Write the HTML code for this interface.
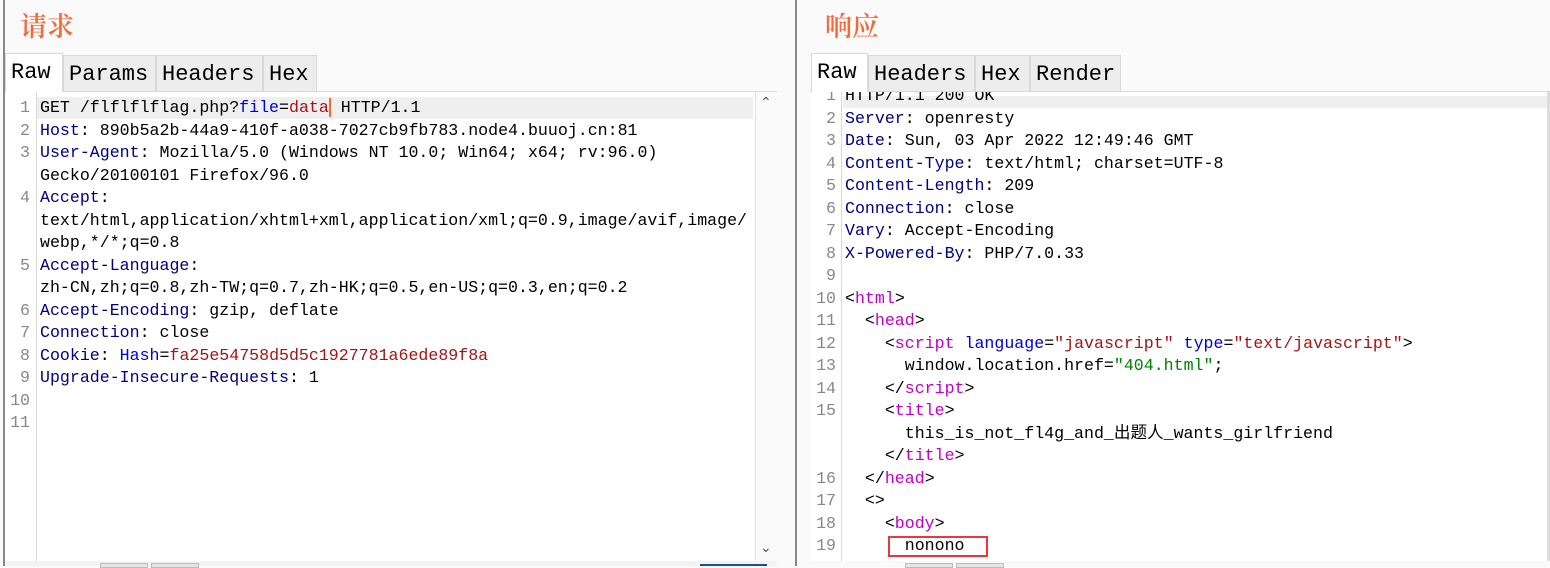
<!DOCTYPE html>
<html><head><meta charset="utf-8"><style>
body{margin:0;width:1550px;height:566px;background:#fafafa;position:relative;overflow:hidden;font-family:"Liberation Mono","Noto Sans CJK SC",monospace;}
.t{position:absolute;font-family:"Noto Serif CJK SC","Liberation Serif",serif;color:#f26a3c;font-size:27px;font-weight:600;}
.tab{position:absolute;height:36px;line-height:38px;font-family:"Liberation Mono",serif;font-size:22px;color:#000;background:#ededed;border:1px solid #d8d8d8;border-bottom:none;padding:0 5px;box-sizing:border-box;}
.tab.a{background:#fff;}
.ed{position:absolute;background:#fff;overflow:hidden;}
.r{position:absolute;height:22.5px;line-height:22.5px;font-size:16.6px;white-space:pre;color:#000;}
.n{position:absolute;height:22.5px;line-height:22.5px;font-size:16.6px;color:#888;text-align:right;}
.k{color:#000080}.v{color:#a31515}.b{color:#0000dd}.m{color:#c000c0}.g{color:#008000}
</style></head><body>
<div style="position:absolute;left:3px;top:0;width:2px;height:566px;background:#888"></div>
<div style="position:absolute;left:795px;top:0;width:2px;height:566px;background:#888"></div>
<div class="t" style="left:20px;top:5px">请求</div>
<div class="t" style="left:825px;top:5px">响应</div>
<div style="position:absolute;left:5px;top:91px;width:772px;height:1px;background:#d8d8d8"></div>
<div style="position:absolute;left:810px;top:91px;width:740px;height:1px;background:#d8d8d8"></div>
<div class="tab a" style="left:5px;top:53px;width:58px;height:39px">Raw</div>
<div class="tab" style="left:63px;top:55px;width:93px">Params</div>
<div class="tab" style="left:156px;top:55px;width:107px">Headers</div>
<div class="tab" style="left:263px;top:55px;width:54px">Hex</div>
<div class="tab a" style="left:811px;top:53px;width:57px;height:39px">Raw</div>
<div class="tab" style="left:868px;top:55px;width:107px">Headers</div>
<div class="tab" style="left:975px;top:55px;width:55px">Hex</div>
<div class="tab" style="left:1030px;top:55px;width:91px">Render</div>

<div class="ed" style="left:5px;top:92px;width:772px;height:469px">
<div style="position:absolute;left:31px;top:0;width:1px;height:469px;background:#d8d8d8"></div>
<div style="position:absolute;left:32px;top:5px;width:716px;height:22px;background:#efefef"></div>
<div style="position:absolute;left:750px;top:0;width:22px;height:469px;background:#fafafa;border-left:1px solid #e0e0e0"></div>
<div style="position:absolute;left:755px;top:3px;font-size:14px;color:#555">&#x2303;</div>
<div style="position:absolute;left:755px;top:448px;font-size:14px;color:#555">&#x2304;</div>
</div>
<div class="ed" style="left:810px;top:92px;width:740px;height:469px">
<div style="position:absolute;left:31px;top:0;width:1px;height:469px;background:#d8d8d8"></div>
<div style="position:absolute;left:33px;top:4px;width:704px;height:12px;background:#efefef"></div>
<div style="position:absolute;left:737px;top:0;width:3px;height:469px;background:#ddd"></div>
</div>

<div class="n" style="left:10px;top:97px;width:20px">1</div><div class="r" style="left:40px;top:97px">GET /flflflflag.php?<span class="b">file</span>=<span class="v">data</span><span style="border-left:2px solid #f26a3c"></span> HTTP/1.1</div>
<div class="n" style="left:10px;top:119.5px;width:20px">2</div><div class="r" style="left:40px;top:119.5px"><span class="k">Host</span>: 890b5a2b-44a9-410f-a038-7027cb9fb783.node4.buuoj.cn:81</div>
<div class="n" style="left:10px;top:142px;width:20px">3</div><div class="r" style="left:40px;top:142px"><span class="k">User-Agent</span>: Mozilla/5.0 (Windows NT 10.0; Win64; x64; rv:96.0)</div>
<div class="r" style="left:40px;top:164.5px">Gecko/20100101 Firefox/96.0</div>
<div class="n" style="left:10px;top:187px;width:20px">4</div><div class="r" style="left:40px;top:187px"><span class="k">Accept</span>:</div>
<div class="r" style="left:40px;top:209.5px">text/html,application/xhtml+xml,application/xml;q=0.9,image/avif,image/</div>
<div class="r" style="left:40px;top:232px">webp,*/*;q=0.8</div>
<div class="n" style="left:10px;top:254.5px;width:20px">5</div><div class="r" style="left:40px;top:254.5px"><span class="k">Accept-Language</span>:</div>
<div class="r" style="left:40px;top:277px">zh-CN,zh;q=0.8,zh-TW;q=0.7,zh-HK;q=0.5,en-US;q=0.3,en;q=0.2</div>
<div class="n" style="left:10px;top:299.5px;width:20px">6</div><div class="r" style="left:40px;top:299.5px"><span class="k">Accept-Encoding</span>: gzip, deflate</div>
<div class="n" style="left:10px;top:322px;width:20px">7</div><div class="r" style="left:40px;top:322px"><span class="k">Connection</span>: close</div>
<div class="n" style="left:10px;top:344.5px;width:20px">8</div><div class="r" style="left:40px;top:344.5px"><span class="k">Cookie</span>: <span class="b">Hash</span>=<span class="v">fa25e54758d5d5c1927781a6ede89f8a</span></div>
<div class="n" style="left:10px;top:367px;width:20px">9</div><div class="r" style="left:40px;top:367px"><span class="k">Upgrade-Insecure-Requests</span>: 1</div>
<div class="n" style="left:10px;top:389.5px;width:20px">10</div>
<div class="n" style="left:10px;top:412px;width:20px">11</div>

<div style="position:absolute;left:810px;top:92px;width:737px;height:469px;overflow:hidden">
<div class="n" style="left:0;top:-7px;width:26px">1</div><div class="r" style="left:35px;top:-7px">HTTP/1.1 200 OK</div>
<div class="n" style="left:0;top:15.5px;width:26px">2</div><div class="r" style="left:35px;top:15.5px"><span class="k">Server</span>: openresty</div>
<div class="n" style="left:0;top:38px;width:26px">3</div><div class="r" style="left:35px;top:38px"><span class="k">Date</span>: Sun, 03 Apr 2022 12:49:46 GMT</div>
<div class="n" style="left:0;top:60.5px;width:26px">4</div><div class="r" style="left:35px;top:60.5px"><span class="k">Content-Type</span>: text/html; charset=UTF-8</div>
<div class="n" style="left:0;top:83px;width:26px">5</div><div class="r" style="left:35px;top:83px"><span class="k">Content-Length</span>: 209</div>
<div class="n" style="left:0;top:105.5px;width:26px">6</div><div class="r" style="left:35px;top:105.5px"><span class="k">Connection</span>: close</div>
<div class="n" style="left:0;top:128px;width:26px">7</div><div class="r" style="left:35px;top:128px"><span class="k">Vary</span>: Accept-Encoding</div>
<div class="n" style="left:0;top:150.5px;width:26px">8</div><div class="r" style="left:35px;top:150.5px"><span class="k">X-Powered-By</span>: PHP/7.0.33</div>
<div class="n" style="left:0;top:173px;width:26px">9</div>
<div class="n" style="left:0;top:195.5px;width:26px">10</div><div class="r" style="left:35px;top:195.5px">&lt;<span class="m">html</span>&gt;</div>
<div class="n" style="left:0;top:218px;width:26px">11</div><div class="r" style="left:35px;top:218px">  &lt;<span class="m">head</span>&gt;</div>
<div class="n" style="left:0;top:240.5px;width:26px">12</div><div class="r" style="left:35px;top:240.5px">    &lt;<span class="m">script</span> <span class="b">language</span>=<span class="v">"javascript"</span> <span class="b">type</span>=<span class="v">"text/javascript"</span>&gt;</div>
<div class="n" style="left:0;top:263px;width:26px">13</div><div class="r" style="left:35px;top:263px">      window.location.href=<span class="g">"404.html"</span>;</div>
<div class="n" style="left:0;top:285.5px;width:26px">14</div><div class="r" style="left:35px;top:285.5px">    &lt;/<span class="m">script</span>&gt;</div>
<div class="n" style="left:0;top:308px;width:26px">15</div><div class="r" style="left:35px;top:308px">    &lt;<span class="m">title</span>&gt;</div>
<div class="r" style="left:35px;top:330.5px">      this_is_not_fl4g_and_出题人_wants_girlfriend</div>
<div class="r" style="left:35px;top:353px">    &lt;/<span class="m">title</span>&gt;</div>
<div class="n" style="left:0;top:375.5px;width:26px">16</div><div class="r" style="left:35px;top:375.5px">  &lt;/<span class="m">head</span>&gt;</div>
<div class="n" style="left:0;top:398px;width:26px">17</div><div class="r" style="left:35px;top:398px">  &lt;&gt;</div>
<div class="n" style="left:0;top:420.5px;width:26px">18</div><div class="r" style="left:35px;top:420.5px">    &lt;<span class="m">body</span>&gt;</div>
<div class="n" style="left:0;top:443px;width:26px">19</div><div class="r" style="left:35px;top:443px">      nonono</div>
<div style="position:absolute;left:78px;top:444px;width:96px;height:17px;border:2px solid #e8383d"></div>
</div>
<div style="position:absolute;left:5px;top:561px;width:772px;height:5px;background:#f3f3f3"></div>
<div style="position:absolute;left:100px;top:563px;width:46px;height:3px;background:#e6e6e6;border:1px solid #bbb"></div>
<div style="position:absolute;left:151px;top:563px;width:46px;height:3px;background:#e6e6e6;border:1px solid #bbb"></div>
<div style="position:absolute;left:700px;top:564px;width:67px;height:2px;background:#1e4f8a"></div>
<div style="position:absolute;left:905px;top:563px;width:46px;height:3px;background:#e6e6e6;border:1px solid #bbb"></div>
<div style="position:absolute;left:956px;top:563px;width:46px;height:3px;background:#e6e6e6;border:1px solid #bbb"></div>
</body></html>
